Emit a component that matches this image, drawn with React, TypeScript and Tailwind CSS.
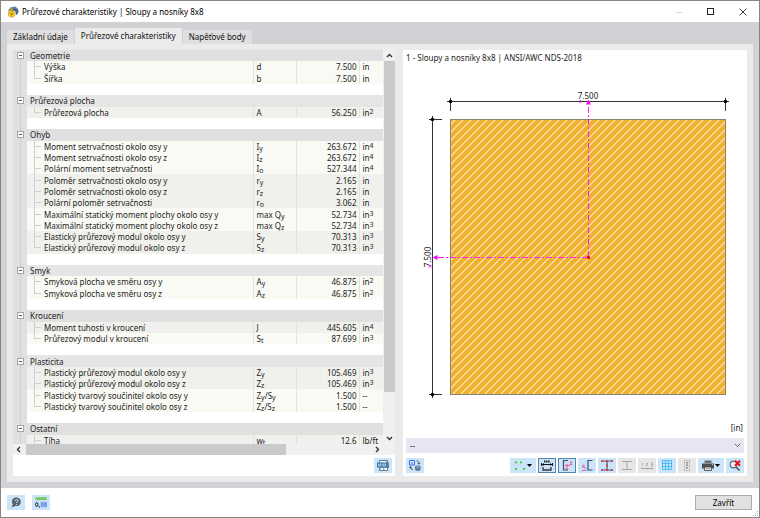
import type { ReactNode } from 'react'
import clsx from 'clsx'

type Row = {
  name: string
  symbol: ReactNode
  value: string
  unit: ReactNode
  dark?: boolean
}

type Group = {
  title: string
  rows: Row[]
}

const in2 = <>in<sup>2</sup></>
const in3 = <>in<sup>3</sup></>
const in4 = <>in<sup>4</sup></>

const groups: Group[] = [
  {
    title: 'Geometrie',
    rows: [
      { name: 'Výška', symbol: 'd', value: '7.500', unit: 'in' },
      { name: 'Šířka', symbol: 'b', value: '7.500', unit: 'in' },
    ],
  },
  {
    title: 'Průřezová plocha',
    rows: [{ name: 'Průřezová plocha', symbol: 'A', value: '56.250', unit: in2, dark: true }],
  },
  {
    title: 'Ohyb',
    rows: [
      { name: 'Moment setrvačnosti okolo osy y', symbol: <>I<sub>y</sub></>, value: '263.672', unit: in4 },
      { name: 'Moment setrvačnosti okolo osy z', symbol: <>I<sub>z</sub></>, value: '263.672', unit: in4 },
      { name: 'Polární moment setrvačnosti', symbol: <>I<sub>o</sub></>, value: '527.344', unit: in4 },
      { name: 'Poloměr setrvačnosti okolo osy y', symbol: <>r<sub>y</sub></>, value: '2.165', unit: 'in', dark: true },
      { name: 'Poloměr setrvačnosti okolo osy z', symbol: <>r<sub>z</sub></>, value: '2.165', unit: 'in', dark: true },
      { name: 'Polární poloměr setrvačnosti', symbol: <>r<sub>o</sub></>, value: '3.062', unit: 'in', dark: true },
      { name: 'Maximální statický moment plochy okolo osy y', symbol: <>max Q<sub>y</sub></>, value: '52.734', unit: in3 },
      { name: 'Maximální statický moment plochy okolo osy z', symbol: <>max Q<sub>z</sub></>, value: '52.734', unit: in3 },
      { name: 'Elastický průřezový modul okolo osy y', symbol: <>S<sub>y</sub></>, value: '70.313', unit: in3, dark: true },
      { name: 'Elastický průřezový modul okolo osy z', symbol: <>S<sub>z</sub></>, value: '70.313', unit: in3, dark: true },
    ],
  },
  {
    title: 'Smyk',
    rows: [
      { name: 'Smyková plocha ve směru osy y', symbol: <>A<sub>y</sub></>, value: '46.875', unit: in2 },
      { name: 'Smyková plocha ve směru osy z', symbol: <>A<sub>z</sub></>, value: '46.875', unit: in2 },
    ],
  },
  {
    title: 'Kroucení',
    rows: [
      { name: 'Moment tuhosti v kroucení', symbol: 'J', value: '445.605', unit: in4, dark: true },
      { name: 'Průřezový modul v kroucení', symbol: <>S<sub>t</sub></>, value: '87.699', unit: in3 },
    ],
  },
  {
    title: 'Plasticita',
    rows: [
      { name: 'Plastický průřezový modul okolo osy y', symbol: <>Z<sub>y</sub></>, value: '105.469', unit: in3, dark: true },
      { name: 'Plastický průřezový modul okolo osy z', symbol: <>Z<sub>z</sub></>, value: '105.469', unit: in3, dark: true },
      { name: 'Plastický tvarový součinitel okolo osy y', symbol: <>Z<sub>y</sub>/S<sub>y</sub></>, value: '1.500', unit: '--' },
      { name: 'Plastický tvarový součinitel okolo osy z', symbol: <>Z<sub>z</sub>/S<sub>z</sub></>, value: '1.500', unit: '--' },
    ],
  },
  {
    title: 'Ostatní',
    rows: [{ name: 'Tíha', symbol: <>w<sub>t</sub></>, value: '12.6', unit: 'lb/ft', dark: true }],
  },
]

function TitleBar() {
  return (
    <header className="flex h-[21px] shrink-0 items-center bg-white pl-1.5">
      <svg viewBox="0 0 12 12" className="h-3 w-3">
        <path d="M1 4.500 4 1.200l4-.6 3 2.200.5 3.500-2 3L8 5z" fill="#3d6486" />
        <path d="M3 2.700 6 1.500l3.500.8L11 4.500" fill="none" stroke="#7ea3bd" strokeWidth=".8" />
        <path d="M6 2.200C3.200 2.800 1.200 5 1.200 7.800c0 2.200 1.400 3.500 3.400 3.500s3.600-1.300 3.600-3.200c0-1.800-1.300-2.900-3-2.900-.7 0-1.200.2-1.600.5.5-1.200 1.400-2 2.900-2.500z" fill="#f2c21a" stroke="#a07c14" strokeWidth=".4" />
        <circle cx="4.800" cy="8.200" r="1.100" fill="#a8841c" />
      </svg>
      <h1 className="ml-[3px] flex-1 text-[8px] text-black">Průřezové charakteristiky | Sloupy a nosníky 8x8</h1>
      <button aria-label="Minimalizovat" className="flex h-full w-8 items-center justify-center">
        <svg viewBox="0 0 8 8" className="h-2 w-2"><path d="M.5 4.500h7" stroke="#dcdcdc" /></svg>
      </button>
      <button aria-label="Maximalizovat" className="flex h-full w-8 items-center justify-center">
        <svg viewBox="0 0 8 8" className="h-2 w-2"><rect x=".5" y=".5" width="6" height="6" fill="none" stroke="#222" strokeWidth="1" /></svg>
      </button>
      <button aria-label="Zavřít okno" className="flex h-full w-8 items-center justify-center">
        <svg viewBox="0 0 8 8" className="h-2 w-2"><path d="m.5.5 7 7m0-7-7 7" stroke="#222" strokeWidth=".9" /></svg>
      </button>
    </header>
  )
}

function Tabs() {
  const tab = 'flex items-center justify-center px-1.5 text-[8px] text-[#111]'
  return (
    <nav role="tablist" className="flex h-4 items-end gap-px">
      <button role="tab" aria-selected="false" className={clsx(tab, 'h-3.5 bg-[#dfdfe0]')}>Základní údaje</button>
      <button role="tab" aria-selected="true" className={clsx(tab, 'h-4 bg-[#ebebeb]')}>Průřezové charakteristiky</button>
      <button role="tab" aria-selected="false" className={clsx(tab, 'h-3.5 bg-[#dfdfe0]')}>Napěťové body</button>
    </nav>
  )
}

const gutter = 'bg-[#e0e0e0] bg-[linear-gradient(#d0d0d0,#d0d0d0)] bg-[length:1px_100%] bg-[position:7px_0] bg-no-repeat'
const branch = 'bg-[linear-gradient(#cfcfcf,#cfcfcf),linear-gradient(#cfcfcf,#cfcfcf)] bg-[position:7px_0,7px_50%] bg-no-repeat'

function PropertyTable() {
  return (
    <table className="h-[396px] w-full table-fixed border-collapse text-[8px] leading-[11px] text-[#1c1c1c] [&_sub]:bottom-[-1px] [&_sub]:text-[7px] [&_sup]:top-[-2px] [&_sup]:text-[7px]">
      <colgroup>
        <col className="w-3.5" />
        <col />
        <col className="w-[43px]" />
        <col className="w-[63px]" />
        <col className="w-6" />
      </colgroup>
      <tbody>
        {groups.map((group, g) => (
          <GroupRows key={group.title} group={group} odd={g % 2 === 1} last={g === groups.length - 1} />
        ))}
      </tbody>
    </table>
  )
}

function GroupRows({ group, odd, last }: { group: Group; odd: boolean; last: boolean }) {
  return (
    <>
      <tr className={clsx('h-[11px]', odd ? 'bg-[#e5e5e5]' : 'bg-[#e0e0e0]')}>
        <td className={clsx(gutter, 'p-0')}>
          <button aria-label={`Sbalit ${group.title}`} className="ml-1 flex h-[7px] w-[7px] items-center justify-center border border-[#a3a3a3] bg-white">
            <span className="h-px w-[3px] bg-[#555]" />
          </button>
        </td>
        <th colSpan={4} scope="colgroup" className="p-0 pl-[3px] text-left font-normal">{group.title}</th>
      </tr>
      {group.rows.map((row, i) => (
        <tr key={row.name} className={clsx('h-[11px]', row.dark ? 'bg-[#f0f1ec]' : 'bg-[#f9faf4]')}>
          <td className={clsx(gutter, 'p-0')} />
          <td
            className={clsx(
              branch,
              'truncate p-0 pl-[17px]',
              i === group.rows.length - 1 && !last ? 'bg-[length:1px_50%,7px_1px]' : 'bg-[length:1px_100%,7px_1px]',
            )}
          >
            {row.name}
          </td>
          <td className="border-l border-[#e2e2e2] p-0 pl-[3px] whitespace-nowrap">{row.symbol}</td>
          <td className="border-l border-[#e2e2e2] p-0 pr-0.5 text-right">{row.value}</td>
          <td className="border-l border-[#e2e2e2] p-0 pl-[3px] whitespace-nowrap">{row.unit}</td>
        </tr>
      ))}
      {!last && (
        <tr className="h-[11px]">
          <td className={clsx(gutter, 'p-0')} />
          <td colSpan={4} className="bg-white p-0" />
        </tr>
      )}
    </>
  )
}

function Arrow({ d, label }: { d: string; label: string }) {
  return (
    <button aria-label={label} className="flex h-[11px] w-[11px] shrink-0 items-center justify-center">
      <svg viewBox="0 0 7 7" className="h-[7px] w-[7px]"><path d={d} fill="none" stroke="#333" strokeWidth="1.400" /></svg>
    </button>
  )
}

function ToolButton({ label, children, wide, pressed, disabled }: { label: string; children: ReactNode; wide?: boolean; pressed?: boolean; disabled?: boolean }) {
  return (
    <button
      aria-label={label}
      aria-pressed={pressed}
      disabled={disabled}
      className={clsx(
        'flex h-[15px] items-center justify-center',
        wide ? 'w-[26px] justify-between pr-0.5 pl-px' : 'w-[18px]',
        disabled ? 'bg-[#e6e6e6]' : 'bg-[#cce4f7]',
        pressed && 'border border-[#4f86b0]',
      )}
    >
      {children}
    </button>
  )
}

function Icon({ children }: { children: ReactNode }) {
  return <svg viewBox="0 0 14 13" className="h-[13px] w-3.5 shrink-0" fill="none">{children}</svg>
}

function Caret() {
  return <svg viewBox="0 0 5 3" className="h-[3px] w-[5px]"><path d="M0 0h5L2.500 3z" fill="#000" /></svg>
}

function LeftPanel() {
  return (
    <section className="flex w-[382px] shrink-0 flex-col bg-white">
      <div className="flex min-h-0 flex-1">
        <div className="min-w-0 flex-1 overflow-hidden">
          <PropertyTable />
        </div>
        <div className="flex w-3 flex-col items-end bg-[#f0f0f0]">
          <Arrow label="Nahoru" d="M1 5l2.500-2.500L6 5" />
          <div className="w-[11px] grow-[8] bg-[#cacaca]" />
          <div className="grow" />
          <Arrow label="Dolů" d="M1 2l2.500 2.500L6 2" />
        </div>
      </div>
      <div className="flex h-[11px] items-center bg-[#f0f0f0]">
        <Arrow label="Doleva" d="M5 1L2.500 3.500 5 6" />
        <div className="ml-0.5 h-full grow-[3] bg-[#cacaca]" />
        <div className="grow" />
        <Arrow label="Doprava" d="M2 1l2.500 2.500L2 6" />
        <div className="w-3" />
      </div>
      <div className="flex h-[21px] items-center justify-end pr-[3px]">
        <ToolButton label="Tisk do protokolu">
          <Icon>
            <path d="M3.500 1.500h8v10h-8z" fill="#e9f1f7" stroke="#51697c" strokeWidth=".8" />
            <path d="M10 1.500 12.500 4v5" stroke="#51697c" strokeWidth=".8" />
            <path d="M1 3.500h10.500v5H1z" fill="#2e78b4" />
            <path d="M2.500 5h2.500v2H2.500zm4.500 0h2.500v2H7z" stroke="#cfe6f7" strokeWidth=".8" />
            <path d="M4 8.500h7.500v3H4z" fill="#f7fafc" stroke="#51697c" strokeWidth=".7" />
            <circle cx="7.800" cy="10" r=".8" fill="#2e78b4" />
          </Icon>
        </ToolButton>
      </div>
    </section>
  )
}

function SectionDrawing() {
  return (
    <svg viewBox="0 0 344 358" className="min-h-0 w-full flex-1" role="img" aria-label="Průřez 8x8">
      <defs>
        <pattern id="hatch" width="8" height="8" patternUnits="userSpaceOnUse" x="0" y="3">
          <rect width="8" height="8" fill="#f0b02e" />
          <path d="M-1 9 9-1M-1 1l2-2M7 9l2-2" stroke="#fdebc6" strokeWidth="1.200" />
        </pattern>
      </defs>
      <rect x="47.500" y="54.500" width="275" height="275" fill="url(#hatch)" stroke="#8b8371" />

      <g stroke="#333" strokeWidth="1">
        <path d="M44 36.500h282M47.500 33v13M322.500 33v13" />
        <path d="M29.500 51v282M26 54.500h13M26 329.500h13" />
      </g>
      <g fill="#000">
        <circle cx="47.500" cy="36.500" r="1.800" />
        <circle cx="322.500" cy="36.500" r="1.800" />
        <circle cx="29.500" cy="54.500" r="1.800" />
        <circle cx="29.500" cy="329.500" r="1.800" />
      </g>

      <g fill="#222" fontSize="8" textAnchor="middle">
        <text x="185" y="34">7.500</text>
        <text transform="translate(28 192) rotate(-90)">7.500</text>
      </g>

      <g stroke="#ff1cf0" strokeWidth="1" strokeDasharray="6 2 2 2">
        <path d="M185.500 192V40" />
        <path d="M185 192.500H34" />
      </g>
      <g fill="#ff00ff">
        <path d="m185.500 34.500 2.500 5h-5z" />
        <path d="m29.500 192.500 5-2.500v5z" />
      </g>
      <g fill="#ff00ff" fontSize="6">
        <text x="176" y="38">z</text>
        <text transform="translate(28 203) rotate(-90)">y</text>
      </g>
      <circle cx="185.500" cy="192.500" r="1.800" fill="#e8101c" />
    </svg>
  )
}

function Toolbar() {
  return (
    <div className="flex h-[21px] items-center gap-0.5 px-[3px]">
      <ToolButton label="Změnit pohled">
        <Icon>
          <path d="M1.500 1.500h5v4.500h-5z" fill="#d4e4ff" stroke="#3a6cf0" />
          <path d="M3 3.500h2v1H3z" fill="#3a6cf0" />
          <path d="M8.500 2c2 0 2.500.8 2.500 3M9.800 4 11 5.300 12.200 4M2.500 7.500c0 2.500.5 3 2.500 3M1.300 8.700l1.200-1.300 1.200 1.300" stroke="#333" strokeWidth=".8" />
          <ellipse cx="9.800" cy="8" rx="2.700" ry="1.200" fill="#8ea8c4" stroke="#3f5f82" strokeWidth=".6" />
          <path d="M7.100 8v2.800c0 1.500 5.400 1.500 5.400 0V8c0 1.500-5.400 1.500-5.400 0z" fill="#5a7ba2" />
        </Icon>
      </ToolButton>
      <div className="flex-1" />
      <ToolButton label="Body" wide>
        <Icon>
          <path d="M2 2.500h1.800v1.800H2zm5 0h1.800v1.800H7zM2 9h1.800v1.800H2zm8 0h1.800v1.800H10z" fill="#22cc33" />
        </Icon>
        <Caret />
      </ToolButton>
      <ToolButton label="Kóty" pressed>
        <Icon>
          <path d="M4 2.500h6" stroke="#222" strokeWidth="1.800" strokeDasharray="1.500 .6" />
          <path d="M1.500 5.500h11M1.500 4v3M12.500 4v3" stroke="#111" />
          <path d="m2 5.500 2-1.500v3zm10 0-2-1.500v3z" fill="#111" />
          <path d="M3 8v3h8V8" stroke="#334" strokeWidth="1.300" />
        </Icon>
      </ToolButton>
      <ToolButton label="Hlavní osy" pressed>
        <Icon>
          <path d="M8 1.500H3.500v9.500H8" stroke="#3a4d78" strokeWidth="1.200" />
          <path d="M5 6.500h5M7 5v6M10 3h2.200L10 5.500h2.200M6 9.500l1 1.500 1-1.500" stroke="#ea3a8c" strokeWidth=".8" />
        </Icon>
      </ToolButton>
      <ToolButton label="Střed smyku">
        <Icon>
          <path d="M12.500 1.500H8v9.500h4.500" stroke="#3a4d78" strokeWidth="1.200" />
          <path d="m2 6.500 3 2.500m0-2.500L2 9M2 11.500h4M3.500 5.500v1M6 8.500v2" stroke="#d8469a" strokeWidth=".8" />
        </Icon>
      </ToolButton>
      <ToolButton label="Napěťové body">
        <Icon>
          <path d="M2 2h10M2 11h10M7 2v9" stroke="#4b5670" strokeWidth="1.200" />
          <path d="M1 1.200h1.800V3H1zM6.100 1.200h1.800V3H6.100zM11.200 1.200H13V3h-1.800zM1 10.200h1.800V12H1zM6.100 10.200h1.800V12H6.100zM11.200 10.200H13V12h-1.800zM6.100 5.700h1.800v1.600H6.100z" fill="#ef2b3a" />
        </Icon>
      </ToolButton>
      <ToolButton label="Části průřezu" disabled>
        <Icon><path d="M2 2.500h10M2 10.500h10M7 2.500v8" stroke="#a6a6a6" /></Icon>
      </ToolButton>
      <ToolButton label="Číslování" disabled>
        <Icon>
          <path d="M2.500 4v3M6 4.500h2L6 6.500h2M11 4h1.500v3H11M11 5.500h1.500" stroke="#a6a6a6" strokeWidth=".8" />
          <path d="M1.500 9.500h11" stroke="#a6a6a6" />
          <path d="M1.500 8.500v2M7 8.500v2M12.500 8.500v2" stroke="#a6a6a6" strokeWidth=".8" />
        </Icon>
      </ToolButton>
      <ToolButton label="Mřížka">
        <Icon>
          <path d="M2.500 1.500h9v9h-9zM5.500 1.500v9M8.500 1.500v9M2.500 4.500h9M2.500 7.500h9" stroke="#4db8f2" strokeWidth="1" />
        </Icon>
      </ToolButton>
      <ToolButton label="Výztuž" disabled>
        <Icon>
          <path d="M4.500 1.500h5v10h-5z" stroke="#9c9c9c" strokeDasharray="1 1" />
          <path d="M7 3v7" stroke="#777" strokeWidth="1.600" strokeDasharray="1.500 1" />
        </Icon>
      </ToolButton>
      <ToolButton label="Tisk" wide>
        <Icon>
          <path d="M3.500 1.500h7V4h-7z" fill="#6c6f73" />
          <path d="M1 4.500h12v5H1z" fill="#4a4d51" />
          <path d="M3.500 8h7v3.500h-7z" fill="#e6e9ec" stroke="#4a4d51" strokeWidth=".9" />
          <path d="M5 9.700h4" stroke="#888" strokeWidth=".7" />
          <path d="M11 5.700h1" stroke="#fff" strokeWidth=".8" />
        </Icon>
        <Caret />
      </ToolButton>
      <ToolButton label="Zrušit přiblížení">
        <Icon>
          <circle cx="5.500" cy="5.500" r="3.300" fill="#e4f1fb" stroke="#5c6d7c" strokeWidth="1.200" />
          <path d="m8 8 3.500 3.500" stroke="#4c5d6c" strokeWidth="1.700" />
          <path d="m7 1.800 5 5m0-5-5 5" stroke="#e8121c" strokeWidth="2" />
        </Icon>
      </ToolButton>
    </div>
  )
}

function RightPanel() {
  return (
    <section className="flex min-w-0 flex-1 flex-col bg-white text-[8px] text-[#1c1c1c]">
      <h2 className="h-[15px] pl-[3px] leading-[15px]">1 - Sloupy a nosníky 8x8 | ANSI/AWC NDS-2018</h2>
      <SectionDrawing />
      <p className="h-[15px] pr-1 text-right leading-[10px]">[in]</p>
      <div className="relative mx-[3px] mb-0.5 h-[15px] bg-[#e6e6f2]">
        <select aria-label="Zobrazení" className="h-full w-full appearance-none px-1 leading-[15px] outline-none">
          <option>--</option>
        </select>
        <svg viewBox="0 0 7 5" className="pointer-events-none absolute top-[5px] right-[3px] h-[5px] w-[7px]">
          <path d="m.8.8 2.700 2.700L6.200.8" fill="none" stroke="#555" strokeWidth=".9" />
        </svg>
      </div>
      <Toolbar />
    </section>
  )
}

function Footer() {
  return (
    <footer className="flex h-[29px] shrink-0 items-center bg-white pl-1.5">
      <div className="flex flex-1 gap-[7px]">
        <ToolButton label="Nápověda">
          <Icon>
            <path d="M7.500 1.500a4.300 4.300 0 1 1-1.300 8.400L2.500 11.500l1.300-3A4.300 4.300 0 0 1 7.500 1.500z" fill="#5a6167" />
            <path d="M6 4.800c.2-1.700 3.200-1.500 3 .1-.1 1-1.400 1-1.500 2.100M7.400 8v1" stroke="#dcebf7" strokeWidth="1" />
          </Icon>
        </ToolButton>
        <ToolButton label="Jednotky a desetinná místa">
          <Icon>
            <path d="M1.500 1h11v3h-11z" fill="#86cf72" />
            <path d="M3.500 2.500V4M5.500 2.500V4M7.500 2.500V4M9.500 2.500V4M11.500 2.500V4" stroke="#4b9c3c" strokeWidth=".6" />
            <ellipse cx="2.800" cy="8.500" rx="1.200" ry="2" stroke="#222" strokeWidth="1" />
            <path d="M5.300 10v1.500" stroke="#222" />
            <path d="M6.500 5.500H13v6H6.500z" fill="#a9c6fb" />
            <path d="M7.500 6.800H9v3.400H7.500zM10.700 6.800h1.500v3.400h-1.500z" stroke="#3f74ea" strokeWidth=".7" />
          </Icon>
        </ToolButton>
      </div>
      <button className="h-[15px] w-[57px] border border-[#adadad] bg-[#e1e1e1] text-[8px] leading-[13px] text-black">Zavřít</button>
      <svg viewBox="0 0 7 7" className="h-[7px] w-[7px] self-end">
        <path d="M5 1h1v1H5zM3 3h1v1H3zM5 3h1v1H5zM1 5h1v1H1zM3 5h1v1H3zM5 5h1v1H5z" fill="#b5b5b5" />
      </svg>
    </footer>
  )
}

export default function App() {
  return (
    <main className="flex h-screen flex-col border border-[#858585] bg-[#d1d1d6] font-['Noto_Sans','Open_Sans',sans-serif]">
      <TitleBar />
      <div className="flex min-h-0 flex-1 flex-col p-1.5">
        <Tabs />
        <div className="flex min-h-0 flex-1 gap-2 bg-[#ebebeb] p-1.5">
          <LeftPanel />
          <RightPanel />
        </div>
      </div>
      <Footer />
    </main>
  )
}
